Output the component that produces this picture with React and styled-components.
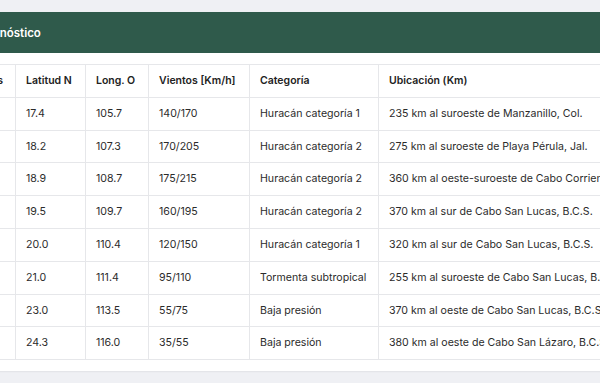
import styled, { createGlobalStyle } from 'styled-components';

const GlobalStyle = createGlobalStyle`
  html, body {
    margin: 0;
    padding: 0;
    background: #eff0f4;
    overflow: hidden;
  }
  body {
    font-family: Inter, "Liberation Sans", sans-serif;
    -webkit-font-smoothing: antialiased;
  }
`;

const Page = styled.div`
  width: 600px;
  height: 383px;
  padding-top: 12px;
  box-sizing: border-box;
  overflow: hidden;
`;

/* the screenshot is a crop of a wider page, so the card starts left of the window */
const Card = styled.section`
  margin-left: -49px;
  width: 760px;
  background: #fff;
  border-radius: 4px;
  box-shadow: 0 1px 2px rgba(0, 0, 0, 0.06);
  overflow: hidden;
`;

const CardHeader = styled.header`
  height: 41px;
  display: flex;
  align-items: center;
  padding-left: 30px;
  background: #2f5a4b;
  color: #fff;
  font-size: 11.5px;
  font-weight: 600;
`;

const CardBody = styled.div`
  padding: 11px;
`;

const Table = styled.table`
  border-collapse: collapse;
  table-layout: fixed;
  width: 738px;
  font-size: 10.6px;
  line-height: 15.8px;
  color: #2b2b2b;
`;

const Th = styled.th`
  box-sizing: border-box;
  width: ${p => p.$w}px;
  text-align: left;
  font-size: 10.5px;
  font-weight: 600;
  color: #222;
  padding: 8px 10px;
  border: 1px solid #e6e7ea;
  white-space: nowrap;
`;

const Td = styled.td`
  padding: 8px 10px;
  border: 1px solid #e6e7ea;
  white-space: nowrap;
  overflow: hidden;
`;

const columns = [
  { label: 'Horas', w: 53 },
  { label: 'Latitud N', w: 70 },
  { label: 'Long. O', w: 63 },
  { label: 'Vientos [Km/h]', w: 101 },
  { label: 'Categoría', w: 129 },
  { label: 'Ubicación (Km)', w: 322 },
];

const rows = [
  ['12', '17.4', '105.7', '140/170', 'Huracán categoría 1', '235 km al suroeste de Manzanillo, Col.'],
  ['24', '18.2', '107.3', '170/205', 'Huracán categoría 2', '275 km al suroeste de Playa Pérula, Jal.'],
  ['36', '18.9', '108.7', '175/215', 'Huracán categoría 2', '360 km al oeste-suroeste de Cabo Corrientes, Jal.'],
  ['48', '19.5', '109.7', '160/195', 'Huracán categoría 2', '370 km al sur de Cabo San Lucas, B.C.S.'],
  ['60', '20.0', '110.4', '120/150', 'Huracán categoría 1', '320 km al sur de Cabo San Lucas, B.C.S.'],
  ['72', '21.0', '111.4', '95/110', 'Tormenta subtropical', '255 km al suroeste de Cabo San Lucas, B.C.S.'],
  ['96', '23.0', '113.5', '55/75', 'Baja presión', '370 km al oeste de Cabo San Lucas, B.C.S.'],
  ['120', '24.3', '116.0', '35/55', 'Baja presión', '380 km al oeste de Cabo San Lázaro, B.C.S.'],
];

export default function App() {
  return (
    <>
      <GlobalStyle />
      <Page>
        <Card>
          <CardHeader>Pronóstico</CardHeader>
          <CardBody>
            <Table>
              <thead>
                <tr>
                  {columns.map(c => (
                    <Th key={c.label} $w={c.w}>{c.label}</Th>
                  ))}
                </tr>
              </thead>
              <tbody>
                {rows.map(r => (
                  <tr key={r[0]}>
                    {r.map((cell, i) => (
                      <Td key={i}>{cell}</Td>
                    ))}
                  </tr>
                ))}
              </tbody>
            </Table>
          </CardBody>
        </Card>
      </Page>
    </>
  );
}
